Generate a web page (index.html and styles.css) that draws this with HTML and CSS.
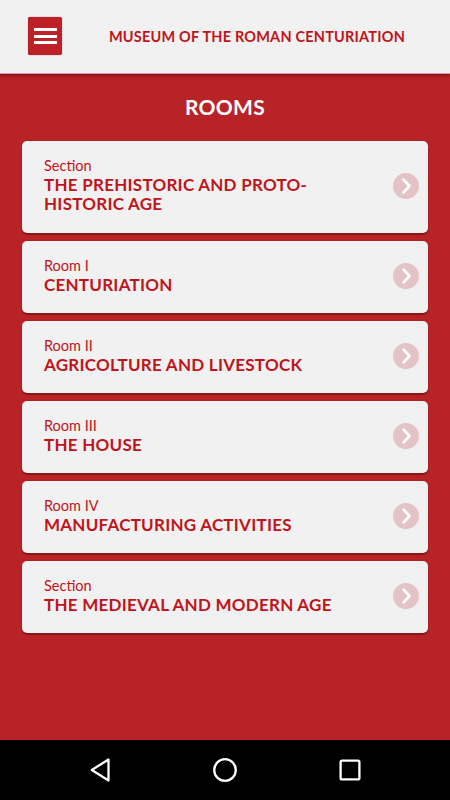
FILE: index.html
```html
<!DOCTYPE html>
<html>
<head>
<meta charset="utf-8">
<link rel="stylesheet" href="styles.css">
</head>
<body>
<div class="app">
  <header class="topbar">
    <button class="menu-btn" aria-label="Menu">
      <span></span><span></span><span></span>
    </button>
    <div class="app-title">MUSEUM OF THE ROMAN CENTURIATION</div>
  </header>
  <main class="content">
    <h1 class="page-title">ROOMS</h1>
    <ul class="rooms">
      <li class="room room--tall">
        <div class="room-text">
          <div class="room-label">Section</div>
          <div class="room-name">THE PREHISTORIC AND PROTO-<br>HISTORIC AGE</div>
        </div>
        <span class="chev"><svg viewBox="0 0 26 26" width="26" height="26"><path d="M10.5 6.5 L16.5 13 L10.5 19.5" fill="none" stroke="#fff" stroke-width="2.6" stroke-linecap="round" stroke-linejoin="round"/></svg></span>
      </li>
      <li class="room">
        <div class="room-text">
          <div class="room-label">Room I</div>
          <div class="room-name">CENTURIATION</div>
        </div>
        <span class="chev"><svg viewBox="0 0 26 26" width="26" height="26"><path d="M10.5 6.5 L16.5 13 L10.5 19.5" fill="none" stroke="#fff" stroke-width="2.6" stroke-linecap="round" stroke-linejoin="round"/></svg></span>
      </li>
      <li class="room">
        <div class="room-text">
          <div class="room-label">Room II</div>
          <div class="room-name">AGRICOLTURE AND LIVESTOCK</div>
        </div>
        <span class="chev"><svg viewBox="0 0 26 26" width="26" height="26"><path d="M10.5 6.5 L16.5 13 L10.5 19.5" fill="none" stroke="#fff" stroke-width="2.6" stroke-linecap="round" stroke-linejoin="round"/></svg></span>
      </li>
      <li class="room">
        <div class="room-text">
          <div class="room-label">Room III</div>
          <div class="room-name">THE HOUSE</div>
        </div>
        <span class="chev"><svg viewBox="0 0 26 26" width="26" height="26"><path d="M10.5 6.5 L16.5 13 L10.5 19.5" fill="none" stroke="#fff" stroke-width="2.6" stroke-linecap="round" stroke-linejoin="round"/></svg></span>
      </li>
      <li class="room">
        <div class="room-text">
          <div class="room-label">Room IV</div>
          <div class="room-name">MANUFACTURING ACTIVITIES</div>
        </div>
        <span class="chev"><svg viewBox="0 0 26 26" width="26" height="26"><path d="M10.5 6.5 L16.5 13 L10.5 19.5" fill="none" stroke="#fff" stroke-width="2.6" stroke-linecap="round" stroke-linejoin="round"/></svg></span>
      </li>
      <li class="room">
        <div class="room-text">
          <div class="room-label">Section</div>
          <div class="room-name">THE MEDIEVAL AND MODERN AGE</div>
        </div>
        <span class="chev"><svg viewBox="0 0 26 26" width="26" height="26"><path d="M10.5 6.5 L16.5 13 L10.5 19.5" fill="none" stroke="#fff" stroke-width="2.6" stroke-linecap="round" stroke-linejoin="round"/></svg></span>
      </li>
    </ul>
  </main>
  <nav class="navbar">
    <span class="nav-slot"><svg viewBox="0 0 20 24" width="20" height="24"><path d="M18.5 1.5 L18.5 22.5 L1.8 12 Z" fill="none" stroke="#fff" stroke-width="2.3" stroke-linejoin="round"/></svg></span>
    <span class="nav-slot"><svg viewBox="0 0 24 24" width="24" height="24"><circle cx="12" cy="12" r="10.8" fill="none" stroke="#fff" stroke-width="2.3"/></svg></span>
    <span class="nav-slot"><svg viewBox="0 0 22 22" width="22" height="22"><rect x="1.6" y="1.6" width="18.8" height="18.8" rx="1.5" fill="none" stroke="#fff" stroke-width="2.3"/></svg></span>
  </nav>
</div>
</body>
</html>
```
FILE: styles.css
```css
* { box-sizing: border-box; }
html, body { margin: 0; padding: 0; }
body {
  font-family: "Lato", "Open Sans", sans-serif;
  background: #b82327;
  width: 450px;
  height: 800px;
  overflow: hidden;
}
.app {
  display: flex;
  flex-direction: column;
  height: 800px;
}
.topbar {
  height: 74px;
  background: #f1f1f1;
  display: flex;
  align-items: center;
  padding-left: 28px;
  border-bottom: 1px solid #d8a0a2;
  box-shadow: 0 2px 2px rgba(110, 10, 15, 0.6);
  position: relative;
  z-index: 1;
  flex-shrink: 0;
}
.menu-btn {
  width: 34px;
  height: 38px;
  margin-top: -1px;
  background: #bd2127;
  border: none;
  border-radius: 2px;
  box-shadow: 0 0 1px rgba(90, 0, 0, 0.8);
  padding: 0;
  display: flex;
  flex-direction: column;
  justify-content: center;
  align-items: center;
  gap: 3.5px;
}
.menu-btn span {
  display: block;
  width: 23px;
  height: 3px;
  background: #fff;
}
.app-title {
  flex: 1;
  text-align: center;
  padding-left: 14px;
  padding-right: 12px;
  color: #c0141b;
  font-size: 14.5px;
  font-weight: 700;
  letter-spacing: 0.2px;
}
.content {
  flex: 1;
  padding: 0 22px;
}
.page-title {
  margin: 20px 0 21px;
  text-align: center;
  color: #fff;
  font-size: 21px;
  font-weight: 700;
  line-height: 26px;
  letter-spacing: 0.3px;
}
.rooms {
  list-style: none;
  margin: 0;
  padding: 0;
  display: flex;
  flex-direction: column;
  gap: 8px;
}
.room {
  background: #f1f1f1;
  border-radius: 5px;
  box-shadow: 0 2px 1px rgba(60, 0, 0, 0.35), 0 0 1px rgba(60,0,0,0.5);
  padding: 16px 22px 19px 22px;
  display: flex;
  align-items: center;
  min-height: 72px;
}
.room--tall { padding-bottom: 20px; }
.room-text { flex: 1; }
.room-label {
  color: #c0141b;
  font-size: 14.5px;
  line-height: 18px;
  font-weight: 400;
}
.room-name {
  color: #c0141b;
  font-size: 17px;
  line-height: 19px;
  font-weight: 700;
  letter-spacing: 0.25px;
}
.chev {
  width: 26px;
  height: 26px;
  border-radius: 50%;
  background: #e3c3c5;
  display: flex;
  margin-right: -13px;
  margin-top: 1px;
  flex-shrink: 0;
}
.navbar {
  height: 60px;
  background: #000;
  flex-shrink: 0;
  display: grid;
  grid-template-columns: repeat(3, 125px);
  justify-content: center;
  align-items: center;
}
.nav-slot {
  display: flex;
  justify-content: center;
  align-items: center;
}
.nav-slot svg { display: block; }
```
